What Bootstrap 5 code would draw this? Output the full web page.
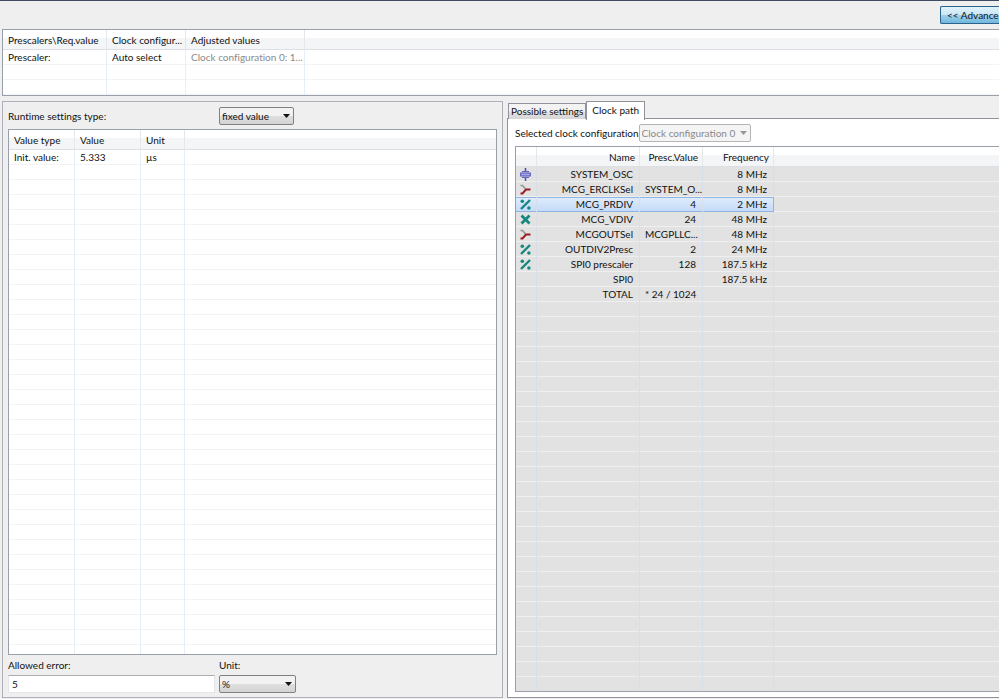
<!DOCTYPE html>
<html lang="en">
<head>
<meta charset="utf-8">
<meta name="viewport" content="width=device-width, initial-scale=1">
<title>Timing settings</title>
<link href="https://cdn.jsdelivr.net/npm/bootstrap@5.3.0/dist/css/bootstrap.min.css" rel="stylesheet">
<style>
  body { font: 10px/14px Lato, "Open Sans", sans-serif; font-variant-ligatures: none; color: #111; background: #efefef; }
  .app { min-height: 100vh; border-top: 1px solid #3f4a63; padding: 0 0 1px 2px; }
  .toolbar { height: 28px; padding-top: 5px; }
  .btn-adv { width: 59px; height: 18px; padding: 0 0 0 6px; font-size: 10px; line-height: 14px; color: #111;
    border: 1px solid #2c628b; border-right: 0; border-radius: 2px 0 0 2px; text-align: left; white-space: nowrap;
    background: linear-gradient(#e3f3fb 0, #c8e6f5 48%, #9fd1ec 52%, #6fb7dd 100%); }
  .panes { display: grid; grid-template-columns: 501fr 492fr; gap: 4px; padding-top: 5px; }
  .group { border: 1px solid #b0b0b8; padding: 5px 5px 4px; }
  .sheet { border: 1px solid #9a9fac; background: repeating-linear-gradient(#0000 0 14px, var(--line) 14px 15px) 0 20px no-repeat, var(--fill);
    --fill: #fff; --line: #f3f3f3; --rule: #e6eef7; }
  .sheet.open-end { border-right: 0; }
  .sheet.dim { --fill: #e2e2e2; --line: #efefef; --rule: #d6dfea; }
  .sheet table { table-layout: fixed; width: 100%; border-collapse: separate; border-spacing: 0; }
  .sheet th, .sheet td { padding: 0 4px 0 5px; white-space: nowrap; font-weight: 400; }
  .sheet th { height: 20px; line-height: 18px; background: linear-gradient(#fff 0 40%, #f3f5f7 40% 100%);
    border-bottom: 1px solid #dcdfe3; border-right: 1px solid #e4e7eb; }
  .sheet td { height: 15px; line-height: 15px; border-right: 1px solid var(--rule); }
  .sheet th:last-child, .sheet td:last-child { border-right: 0; }
  .sheet .filler td { height: auto; }
  .numeric th, .numeric td { text-align: right; }
  .numeric td { padding-right: 6px; }
  .numeric td:first-child { padding: 0 0 0 4px; text-align: left; }
  .numeric svg { display: block; }
  .sheet .picked td { background: linear-gradient(#e0ecfb, #c3dafa); box-shadow: inset 0 1px #8fb5e2, inset 0 -1px #8fb5e2; }
  .sheet .picked td:last-child { background: none; box-shadow: none; }
  .sheet .picked td:nth-child(4) { border-right-color: #8fb5e2; }
  .faded { color: #8a8a8a; }
  .form-select.combo { height: 18px; min-height: 0; padding: 0 10px 0 2px; font-size: 10px; line-height: 14px; color: #111;
    border: 1px solid #808080; border-radius: 2px;
    background: url("data:image/svg+xml,%3Csvg xmlns='http://www.w3.org/2000/svg' viewBox='0 0 8 4'%3E%3Cpath d='M0 0h7L3.500 4z' fill='%23111'/%3E%3C/svg%3E") right 2px center / 8px 4px no-repeat, linear-gradient(#f2f2f2 0 48%, #dfdfdf 52%, #d3d3d3); }
  .form-select.combo:disabled { color: #8a8a8a; border-color: #b5b5b5;
    background: url("data:image/svg+xml,%3Csvg xmlns='http://www.w3.org/2000/svg' viewBox='0 0 8 4'%3E%3Cpath d='M0 0h7L3.500 4z' fill='%23999'/%3E%3C/svg%3E") right 2px center / 8px 4px no-repeat, #f4f4f4; }
  .w-type { width: 75px; } .w-unit { width: 77px; } .w-clock { width: 112px; }
  .first-col { width: 211px; }
  .form-control.entry { width: 207px; height: 18px; min-height: 0; padding: 0 3px; font-size: 10px; line-height: 14px; color: #111;
    border: 1px solid #e2e5ea; border-top-color: #abadb3; border-radius: 0; }
  .above { display: block; margin-bottom: 3px; }
  .settings-foot { padding-top: 3px; }
  .nav-tabs.tabs { border: 0; height: 17px; padding-left: 1px; align-items: flex-end; position: relative; }
  .tabs .nav-link { height: 16px; padding: 0 2px; margin: 0; font-size: 10px; line-height: 15px; color: #111; white-space: nowrap;
    border: 1px solid #90939b; border-bottom: 0; border-radius: 0; background: linear-gradient(#f3f3f3 0 48%, #e3e3e3 52%, #d6d6d6); }
  .tabs .nav-link.active { height: 19px; padding: 0 5px 2px; margin-bottom: -1px; background: #fff; color: #111; border-color: #90939b; }
  .tab-body { background: #fff; border: 1px solid #90939b; border-right: 0; padding: 5px 0 5px 7px; }
</style>
<script src="https://cdn.jsdelivr.net/npm/bootstrap@5.3.0/dist/js/bootstrap.bundle.min.js"></script>
</head>
<body>
<svg class="d-none" aria-hidden="true">
  <symbol id="osc" viewBox="0 0 11 13"><path d="M5.500 0v4M5.500 9v4" stroke="#4b4bab" stroke-width="1.500"/><path d="M2 3.500h7M2 9.500h7" stroke="#6464c0" stroke-width="1.200"/><rect x=".7" y="5" width="9.600" height="3" fill="#a9a9e6" stroke="#4f4fb3"/></symbol>
  <symbol id="mux" viewBox="0 0 11 13"><path d="M.5 2.500h2l3 3.500" fill="none" stroke="#929292" stroke-width="1.500"/><path d="M.5 10.500h2l3.500-4h4.500" fill="none" stroke="#9b1c22" stroke-width="1.900"/></symbol>
  <symbol id="div" viewBox="0 0 11 13"><path d="M1 11L10 2" stroke="#15897f" stroke-width="2.400"/><circle cx="2.300" cy="3.300" r="1.800" fill="#15897f"/><circle cx="8.900" cy="10" r="1.800" fill="#15897f"/></symbol>
  <symbol id="mul" viewBox="0 0 11 13"><path d="M1.500 2.500l8 8M9.500 2.500l-8 8" stroke="#15897f" stroke-width="2.800"/></symbol>
</svg>
<div class="app d-flex flex-column overflow-hidden">
  <header class="toolbar d-flex justify-content-end">
    <button type="button" class="btn btn-adv">&lt;&lt; Advance</button>
  </header>

  <div class="sheet open-end">
    <table>
      <colgroup><col style="width:104px"><col style="width:79px"><col style="width:119px"><col></colgroup>
      <thead><tr><th>Prescalers\Req.value</th><th>Clock configur...</th><th>Adjusted values</th><th></th></tr></thead>
      <tbody>
        <tr><td>Prescaler:</td><td>Auto select</td><td class="faded">Clock configuration 0: 1...</td><td></td></tr>
        <tr><td></td><td></td><td></td><td></td></tr>
        <tr><td></td><td></td><td></td><td></td></tr>
      </tbody>
    </table>
  </div>

  <main class="panes flex-grow-1">
    <section class="group d-flex flex-column">
      <div class="d-flex align-items-center mb-1">
        <label class="first-col" for="rtype">Runtime settings type:</label>
        <select id="rtype" class="form-select combo w-type"><option>fixed value</option></select>
      </div>
      <div class="sheet d-flex flex-grow-1">
        <table>
          <colgroup><col style="width:66px"><col style="width:66px"><col style="width:44px"><col></colgroup>
          <thead><tr><th>Value type</th><th>Value</th><th>Unit</th><th></th></tr></thead>
          <tbody>
            <tr><td>Init. value:</td><td>5.333</td><td>µs</td><td></td></tr>
            <tr class="filler"><td></td><td></td><td></td><td></td></tr>
          </tbody>
        </table>
      </div>
      <div class="settings-foot d-flex">
        <div class="first-col">
          <label class="above" for="err">Allowed error:</label>
          <input id="err" class="form-control entry" type="text" value="5">
        </div>
        <div>
          <label class="above" for="unit">Unit:</label>
          <select id="unit" class="form-select combo w-unit"><option>%</option></select>
        </div>
      </div>
    </section>

    <section class="d-flex flex-column">
      <div class="nav nav-tabs tabs" role="tablist">
        <button type="button" class="nav-link" role="tab" aria-selected="false">Possible settings</button>
        <button type="button" class="nav-link active" role="tab" aria-selected="true">Clock path</button>
      </div>
      <div class="tab-body d-flex flex-column flex-grow-1">
        <div class="d-flex align-items-center mb-1">
          <label for="clk">Selected clock configuration</label>
          <select id="clk" class="form-select combo w-clock" disabled><option>Clock configuration 0</option></select>
        </div>
        <div class="sheet dim open-end d-flex flex-grow-1">
          <table class="numeric">
            <colgroup><col style="width:21px"><col style="width:103px"><col style="width:63px"><col style="width:71px"><col></colgroup>
            <thead><tr><th></th><th>Name</th><th>Presc.Value</th><th>Frequency</th><th></th></tr></thead>
            <tbody>
              <tr><td><svg width="11" height="13"><use href="#osc"/></svg></td><td>SYSTEM_OSC</td><td></td><td>8 MHz</td><td></td></tr>
              <tr><td><svg width="11" height="13"><use href="#mux"/></svg></td><td>MCG_ERCLKSel</td><td>SYSTEM_O...</td><td>8 MHz</td><td></td></tr>
              <tr class="picked"><td><svg width="11" height="13"><use href="#div"/></svg></td><td>MCG_PRDIV</td><td>4</td><td>2 MHz</td><td></td></tr>
              <tr><td><svg width="11" height="13"><use href="#mul"/></svg></td><td>MCG_VDIV</td><td>24</td><td>48 MHz</td><td></td></tr>
              <tr><td><svg width="11" height="13"><use href="#mux"/></svg></td><td>MCGOUTSel</td><td>MCGPLLC...</td><td>48 MHz</td><td></td></tr>
              <tr><td><svg width="11" height="13"><use href="#div"/></svg></td><td>OUTDIV2Presc</td><td>2</td><td>24 MHz</td><td></td></tr>
              <tr><td><svg width="11" height="13"><use href="#div"/></svg></td><td>SPI0 prescaler</td><td>128</td><td>187.5 kHz</td><td></td></tr>
              <tr><td></td><td>SPI0</td><td></td><td>187.5 kHz</td><td></td></tr>
              <tr><td></td><td>TOTAL</td><td>* 24 / 1024</td><td></td><td></td></tr>
              <tr class="filler"><td></td><td></td><td></td><td></td><td></td></tr>
            </tbody>
          </table>
        </div>
      </div>
    </section>
  </main>
</div>
</body>
</html>
